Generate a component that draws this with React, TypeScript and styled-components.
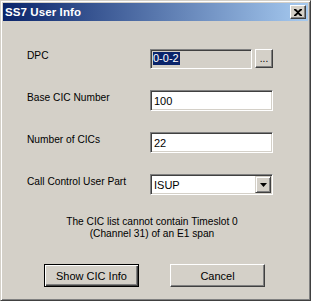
import styled, { createGlobalStyle } from "styled-components";

const GlobalStyle = createGlobalStyle`
  html, body {
    margin: 0;
    padding: 0;
    background: #d4d0c8;
  }
`;

const Window = styled.div`
  box-sizing: border-box;
  width: 311px;
  height: 301px;
  padding: 2px;
  background: #d4d0c8;
  border: 1px solid;
  border-color: #d4d0c8 #404040 #404040 #d4d0c8;
  box-shadow: inset 1px 1px #ffffff, inset -1px -1px #808080;
  display: flex;
  flex-direction: column;
  font-family: "Liberation Sans", Arial, sans-serif;
  font-size: 10.2px;
  color: #000;
`;

const TitleBar = styled.div`
  height: 18px;
  display: flex;
  align-items: center;
  justify-content: space-between;
  padding: 0 2px;
  background: linear-gradient(to right, #0a246a, #a6caf0);
`;

const Title = styled.span`
  color: #fff;
  font-weight: bold;
  font-size: 11.5px;
  letter-spacing: 0.1px;
`;

const CloseButton = styled.div`
  box-sizing: border-box;
  width: 16px;
  height: 14px;
  background: #d4d0c8;
  border: 1px solid;
  border-color: #ffffff #404040 #404040 #ffffff;
  box-shadow: inset -1px -1px #808080;
  display: flex;
  align-items: center;
  justify-content: center;
`;

const Body = styled.div`
  display: flex;
  flex-direction: column;
  padding: 27px 31px 0 24px;
`;

const Form = styled.div`
  display: grid;
  grid-template-columns: 123px 123px;
  grid-auto-rows: 21px;
  row-gap: 21px;
  align-items: center;
`;

// labels sit a little above the field's middle, like the dialog template
const Label = styled.span`
  align-self: start;
  padding-top: 1px;
  line-height: 13px;
  white-space: nowrap;
`;

const FieldRow = styled.div`
  display: flex;
  align-items: center;
  gap: 3px;
`;

const Field = styled.div<{ $readOnly?: boolean; $h?: number }>`
  box-sizing: border-box;
  flex: 1;
  height: ${(p) => p.$h ?? 21}px;
  display: flex;
  align-items: center;
  background: ${(p) => (p.$readOnly ? "#d4d0c8" : "#ffffff")};
  border: 1px solid;
  border-color: #808080 #ffffff #ffffff #808080;
  box-shadow: inset 1px 1px #404040, inset -1px -1px #d4d0c8;
  padding: 1px 1px 1px 3px;
  font-size: 11px;
`;

const Selected = styled.span`
  background: #0a246a;
  color: #fff;
  line-height: 13px;
  padding: 0 1px 0 0;
  margin-left: -1px;
`;

const ComboBox = styled(Field)`
  padding-right: 2px;
  justify-content: space-between;
`;

const DropButton = styled.div`
  box-sizing: border-box;
  width: 16px;
  height: 17px;
  margin-right: -1px;
  background: #d4d0c8;
  border: 1px solid;
  border-color: #d4d0c8 #404040 #404040 #d4d0c8;
  box-shadow: inset 1px 1px #ffffff, inset -1px -1px #808080;
  display: flex;
  align-items: center;
  justify-content: center;
`;

const SmallButton = styled.div`
  box-sizing: border-box;
  width: 18px;
  height: 19px;
  background: #d4d0c8;
  border: 1px solid;
  border-color: #ffffff #404040 #404040 #ffffff;
  box-shadow: inset -1px -1px #808080;
  display: flex;
  align-items: flex-end;
  justify-content: center;
  padding-bottom: 4px;
  font-size: 10px;
  line-height: 8px;
`;

const Note = styled.div`
  margin-top: 21px;
  text-align: center;
  line-height: 12px;
`;

const ButtonRow = styled.div`
  display: flex;
  gap: 31px;
  margin-top: 24px;
  margin-left: 17px;
`;

const PushButton = styled.div<{ $default?: boolean }>`
  box-sizing: border-box;
  width: 95px;
  height: 23px;
  background: #d4d0c8;
  display: flex;
  align-items: center;
  justify-content: center;
  font-size: 11px;
  border: 1px solid;
  border-color: ${(p) =>
    p.$default ? "#000" : "#ffffff #404040 #404040 #ffffff"};
  box-shadow: ${(p) =>
    p.$default
      ? "inset 1px 1px #ffffff, inset -1px -1px #404040, inset -2px -2px #808080"
      : "inset -1px -1px #808080"};
`;

export default function App() {
  return (
    <>
      <GlobalStyle />
      <Window>
        <TitleBar>
          <Title>SS7 User Info</Title>
          <CloseButton>
            <svg width="8" height="7" viewBox="0 0 8 7">
              <path d="M0 0h2l2 2 2-2h2v1L5 3.5 8 6v1H6L4 5 2 7H0V6l3-2.5L0 1z" fill="#000" />
            </svg>
          </CloseButton>
        </TitleBar>
        <Body>
          <Form>
            <Label>DPC</Label>
            <FieldRow>
              <Field $readOnly $h={20}>
                <Selected>0-0-2</Selected>
              </Field>
              <SmallButton>...</SmallButton>
            </FieldRow>

            <Label>Base CIC Number</Label>
            <Field>100</Field>

            <Label>Number of CICs</Label>
            <Field>22</Field>

            <Label>Call Control User Part</Label>
            <ComboBox>
              <span>ISUP</span>
              <DropButton>
                <svg width="7" height="4" viewBox="0 0 7 4">
                  <path d="M0 0h7L3.5 4z" fill="#000" />
                </svg>
              </DropButton>
            </ComboBox>
          </Form>
          <Note>
            The CIC list cannot contain Timeslot 0
            <br />
            (Channel 31) of an E1 span
          </Note>
          <ButtonRow>
            <PushButton $default>Show CIC Info</PushButton>
            <PushButton>Cancel</PushButton>
          </ButtonRow>
        </Body>
      </Window>
    </>
  );
}
